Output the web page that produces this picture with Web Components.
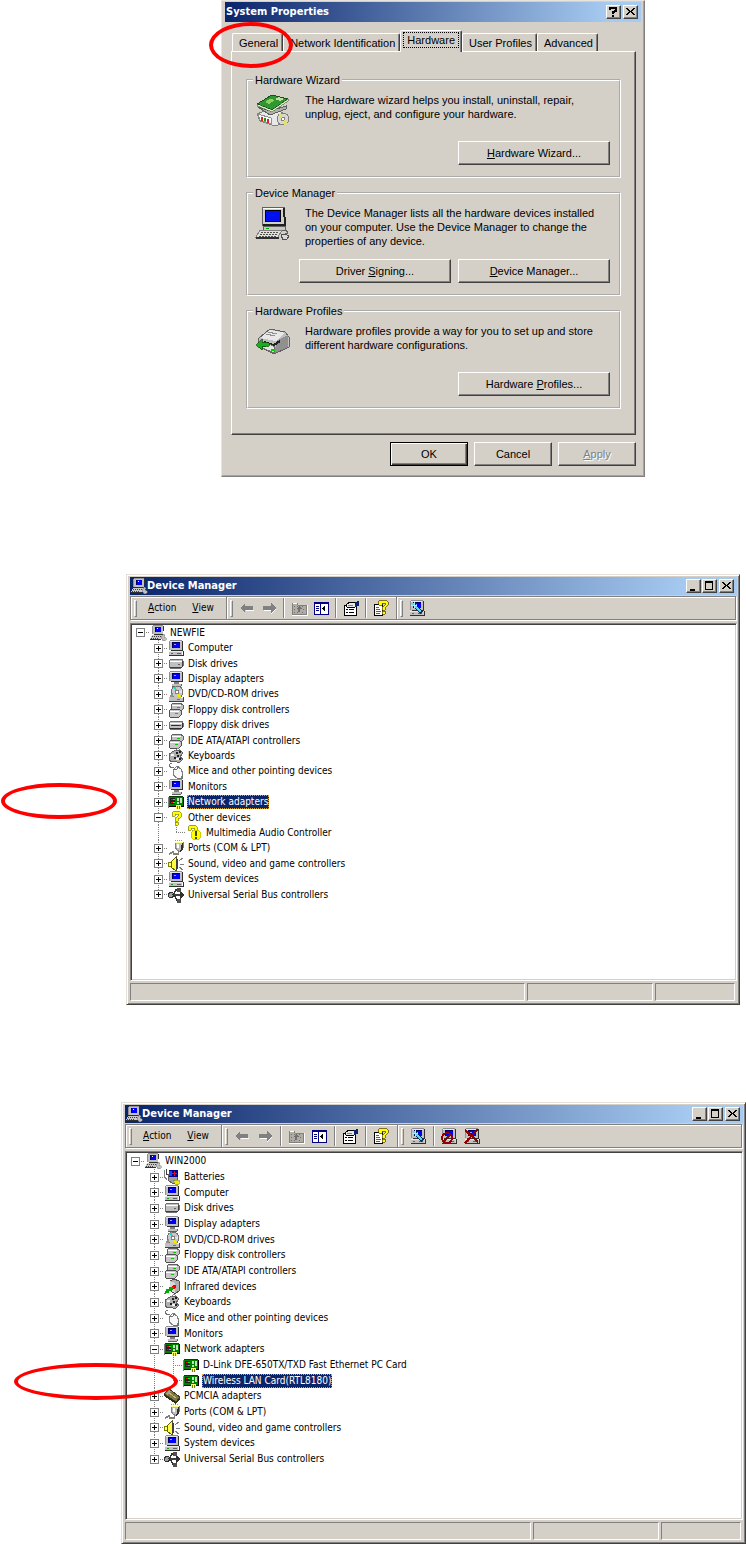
<!DOCTYPE html>
<html lang="en">

<head>
    <title>System Properties</title>
    <meta charset="utf-8">
    <meta name="viewport" content="width=device-width, initial-scale=1" />

    <style>
        :root {
            --face: #d4d0c8;
            --shadow: #808080;
            --dark: #404040;
            --navy: #0a246a;
            --sky: #a6caf0;
            --ui: "DejaVu Sans Condensed", "DejaVu Sans", sans-serif;
            --dialog: "Liberation Sans", sans-serif;
        }

        body {
            margin: 0;
            background: #fff;
            color: #000;
            font: 10px/14px var(--ui);
        }

        section {
            position: relative;
        }

        .props {
            padding: 0 101px 97px 221px;
        }

        .first {
            padding: 0 6px 97px 126px;
        }

        .second {
            padding: 0 0 0 121px;
            --tool: 23px;
        }

        mark-ring {
            position: absolute;
        }

        .props mark-ring {
            left: 209px;
            top: 22px;
            width: 84px;
            height: 46px;
        }

        .first mark-ring {
            left: 1px;
            top: 209px;
            width: 116px;
            height: 36px;
        }

        .second mark-ring {
            left: 14px;
            top: 261px;
            width: 164px;
            height: 37px;
        }
    </style>

    <template id="mark-ring">
        <style>
            :host {
                box-sizing: border-box;
                border: 4px solid #f00;
                border-radius: 50%;
                pointer-events: none;
            }
        </style>
    </template>

    <template id="title-bar">
        <style>
            :host {
                display: flex;
                align-items: center;
                height: 18px;
                padding: 0 3px 0 1px;
                background: linear-gradient(90deg, var(--navy), var(--sky) 92%);
                color: #fff;
            }

            h1 {
                flex: 1;
                margin: 0;
                font: bold 11px/14px var(--ui);
            }

            ::slotted(cap-button) {
                margin-left: 1px;
            }

            ::slotted(cap-button:last-child) {
                margin-left: 2px;
            }
        </style>
        <slot name="icon"></slot>
        <h1><slot></slot></h1>
        <slot name="buttons"></slot>
    </template>

    <template id="cap-button">
        <style>
            :host {
                display: block;
            }

            button {
                display: block;
                box-sizing: border-box;
                width: 15px;
                height: 14px;
                padding: 0;
                border: 1px solid;
                border-color: #fff var(--dark) var(--dark) #fff;
                background: var(--face);
                box-shadow: inset -1px -1px var(--shadow);
            }

            svg {
                display: block;
                width: 13px;
                height: 12px;
            }
        </style>
        <button type="button"></button>
    </template>

    <template id="push-button">
        <style>
            :host {
                display: block;
                width: 152px;
            }

            :host([small]) {
                width: 78px;
            }

            button {
                display: block;
                box-sizing: border-box;
                width: 100%;
                height: 24px;
                padding: 0;
                border: 1px solid;
                border-color: #fff var(--dark) var(--dark) #fff;
                background: var(--face);
                box-shadow: inset -1px -1px var(--shadow);
                color: #000;
                font: 11px/14px var(--dialog);
            }

            :host([default]) button {
                border-color: #000;
                box-shadow: inset 1px 1px #fff, inset -1px -1px var(--dark), inset -2px -2px var(--shadow);
            }

            button:disabled {
                color: var(--shadow);
                text-shadow: 1px 1px #fff;
            }
        </style>
        <button type="button"><slot></slot></button>
    </template>

    <template id="tab-button">
        <style>
            :host {
                display: block;
            }

            button {
                display: block;
                height: 18px;
                padding: 0 4px 0 6px;
                border: 1px solid;
                border-color: #fff var(--dark) transparent #fff;
                border-bottom: 0;
                border-radius: 2px 2px 0 0;
                background: var(--face);
                box-shadow: inset -1px 0 var(--shadow);
                color: #000;
                font: 11px/14px var(--dialog);
            }

            :host([selected]) button {
                height: 22px;
                margin-bottom: -1px;
                padding: 0 3px 3px 3px;
            }

            :host([selected]) slot {
                display: block;
                padding: 0 3px;
                outline: 1px dotted #000;
            }
        </style>
        <button type="button" role="tab"><slot></slot></button>
    </template>

    <template id="group-box">
        <style>
            :host {
                display: block;
                --body: 89px;
            }

            :host([tall]) {
                --body: 94px;
            }

            fieldset {
                margin: 0;
                padding: 0;
                border: 2px groove #fff;
            }

            legend {
                margin-left: 5px;
                padding: 0 2px;
            }

            .body {
                display: flex;
                flex-direction: column;
                justify-content: space-between;
                box-sizing: border-box;
                min-height: var(--body);
                padding: 6px 9px 11px 8px;
            }

            .text {
                display: flex;
                gap: 15px;
            }

            p {
                flex: 1;
                margin: 0;
            }

            .actions {
                display: flex;
                justify-content: flex-end;
                gap: 7px;
            }
        </style>
        <fieldset>
            <legend></legend>
            <div class="body">
                <div class="text">
                    <slot name="icon"></slot>
                    <p><slot></slot></p>
                </div>
                <div class="actions"><slot name="actions"></slot></div>
            </div>
        </fieldset>
    </template>

    <template id="property-dialog">
        <style>
            :host {
                display: block;
                padding: 1px 3px 10px;
                border: 1px solid;
                border-color: #e8e4dc var(--shadow) var(--shadow) #e8e4dc;
                background: var(--face);
                box-shadow: inset -1px -1px #a8a49c;
                font: 11px/14px var(--dialog);
            }

            .tabs {
                display: flex;
                align-items: flex-end;
                margin: 8px 6px 0 7px;
                height: 21px;
            }

            .page {
                display: flex;
                flex-direction: column;
                gap: 8px;
                margin: 0 5px 0 6px;
                padding: 21px 14px 25px;
                border: 1px solid;
                border-color: #fff var(--dark) var(--dark) #fff;
                box-shadow: inset -1px -1px var(--shadow);
            }

            .buttons {
                display: flex;
                justify-content: flex-end;
                gap: 6px;
                margin: 7px 5px 0;
            }
        </style>
        <slot name="title"></slot>
        <div class="tabs" role="tablist"><slot name="tabs"></slot></div>
        <div class="page"><slot></slot></div>
        <div class="buttons"><slot name="buttons"></slot></div>
    </template>

    <template id="tool-button">
        <style>
            :host {
                display: block;
            }

            button {
                display: flex;
                align-items: center;
                justify-content: center;
                min-width: var(--tool, 22px);
                height: 20px;
                padding: 0;
                border: 0;
                background: none;
                color: #000;
                font: inherit;
            }

            :host([menu]) button {
                padding: 0 8px;
            }
        </style>
        <button type="button"><slot></slot></button>
    </template>

    <template id="tool-band">
        <style>
            :host {
                display: flex;
                align-items: center;
                padding: 0 4px 0 3px;
                border-right: 1px solid var(--shadow);
                box-shadow: 1px 0 #fff;
            }

            :host(:last-of-type) {
                border: 0;
                box-shadow: none;
            }

            .grip {
                box-sizing: border-box;
                width: 3px;
                height: 17px;
                margin-right: 3px;
                border: 1px solid;
                border-color: #fff var(--shadow) var(--shadow) #fff;
            }

            ::slotted(hr) {
                width: 1px;
                height: 20px;
                margin: 0 3px;
                border: solid;
                border-width: 0 1px 0 0;
                border-color: #fff;
                background: var(--shadow);
            }
        </style>
        <div class="grip"></div>
        <slot></slot>
    </template>

    <template id="tree-item">
        <style>
            :host {
                display: flex;
                align-items: center;
                height: 15px;
            }

            .cell {
                flex: none;
                align-self: stretch;
                display: flex;
                align-items: center;
                width: 14px;
                --v: repeating-linear-gradient(#808080 0 1px, transparent 1px 2px) 4px 0 / 1px 100% no-repeat;
                --half: repeating-linear-gradient(#808080 0 1px, transparent 1px 2px) 4px 0 / 1px 50% no-repeat;
                --h: repeating-linear-gradient(90deg, #808080 0 1px, transparent 1px 2px) 4px 50% / 10px 1px no-repeat;
            }

            .cell.indent {
                width: var(--indent);
            }

            .cell.line {
                background: var(--v);
            }

            .cell.node {
                background: var(--v), var(--h);
            }

            .cell.root {
                background: var(--h);
            }

            .cell.end {
                background: var(--half), var(--h);
            }

            button {
                display: block;
                width: 9px;
                height: 9px;
                padding: 0;
                border: 1px solid var(--shadow);
                background: #fff;
            }

            button svg {
                display: block;
                width: 7px;
                height: 7px;
            }

            .label {
                margin-left: 3px;
                padding: 0 1px;
                white-space: nowrap;
            }

            :host([selected]) .label {
                background: var(--navy);
                color: #fff;
                outline: 1px dotted #e0a030;
                outline-offset: -1px;
            }
        </style>
        <span class="label"><slot></slot></span>
    </template>

    <template id="tree-view">
        <style>
            :host {
                display: block;
                box-sizing: border-box;
                min-height: 358px;
                padding: 1px 4px 0 5px;
                border: 1px solid;
                border-color: var(--shadow) #fff #fff var(--shadow);
                background: #fff;
                box-shadow: inset 1px 1px var(--dark), inset -1px -1px var(--face);
                --indent: 18px;
            }

            ::slotted(tree-item:nth-child(5n + 2)),
            ::slotted(tree-item:nth-child(5n + 5)) {
                height: 16px;
            }

            :host([roomy]) {
                min-height: 369px;
                --indent: 19px;
            }

            :host([roomy]) ::slotted(tree-item) {
                height: 16px;
            }

            :host([roomy]) ::slotted(tree-item:nth-child(3n)) {
                height: 15px;
            }
        </style>
        <slot></slot>
    </template>

    <template id="console-window">
        <style>
            :host {
                display: block;
                padding: 2px 2px 2px 3px;
                border: 1px solid;
                border-color: #e4e0d8 var(--dark) var(--dark) #e4e0d8;
                background: var(--face);
                box-shadow: inset 1px 1px #fff, inset -1px -1px var(--shadow);
            }

            .tools {
                display: flex;
                height: 22px;
                margin: 1px 1px 3px 0;
                border: 1px solid var(--shadow);
                box-shadow: inset 1px 1px #fff, 1px 1px #fff;
            }

            .status {
                display: flex;
                gap: 2px;
                margin: 2px 2px 1px 0;
            }

            .status div {
                box-sizing: border-box;
                width: 80px;
                height: 18px;
                border: 1px solid;
                border-color: var(--shadow) #fff #fff var(--shadow);
            }

            .status div:nth-child(1) {
                flex: 1;
            }

            .status div:nth-child(2) {
                width: 126px;
            }
        </style>
        <slot name="title"></slot>
        <div class="tools" role="toolbar"><slot name="tools"></slot></div>
        <slot></slot>
        <div class="status">
            <div></div>
            <div></div>
            <div></div>
        </div>
    </template>

    <template id="win-icon">
        <style>
            :host {
                display: block;
                flex: none;
                width: 16px;
                height: 16px;
            }

            :host([large]) {
                width: 34px;
                height: 34px;
            }

            svg {
                display: block;
                width: 100%;
                height: 100%;
                overflow: visible;
            }
        </style>
    </template>

    <script>
        // shared pieces, 16 x 16 grid
        const monitor = `
            <path d="M2 1h12v9H2z" fill="#c0c0c0"/><path d="M1 1h1v9H1zM2 0h12v1H2z" fill="#909090"/><path d="M2 1h11v1H2z" fill="#e8e8e8"/>
            <path d="M4 2h8v6H4z" fill="#000060"/><path d="M5 3h7v5H5z" fill="#0000ff"/><path d="M6 4h2v1H6z" fill="#a0a0ff"/>
            <path d="M14 1h1v10H3v-1h11z" fill="#303030"/>`;
        const desktop = monitor + `
            <path d="M1 12h13v3H1z" fill="#c0c0c0"/><path d="M1 11h14v1H1z" fill="#e8e8e8"/>
            <path d="M1 15h14v-4h1v5H1z" fill="#303030"/><path d="M3 13h2v1H3z" fill="#0a0"/><path d="M9 13h4v1H9z" fill="#606060"/>`;
        const screen = monitor + `
            <path d="M6 11h5v2H6z" fill="#808080"/><path d="M4 13h9v2H4z" fill="#c0c0c0"/><path d="M4 15h9v1H4zM13 13h1v2h-1z" fill="#606060"/>`;
        const workstation = `
            <path d="M3 1h10v8H3z" fill="#c0c0c0"/><path d="M3 0h10v1H3zM2 1h1v8H2z" fill="#909090"/><path d="M5 2h6v5H5z" fill="#000060"/>
            <path d="M6 2h5v5H6z" fill="#0000ff"/><path d="M7 3h1v1H7z" fill="#fff"/><path d="M13 1h1v8H4v1h10z" fill="#303030"/>
            <path d="M2 10h12l-2 4H0z" fill="#c8c8c8"/><path d="M2 11h1v1H2zm2 0h1v1H4zm2 0h1v1H6zm2 0h1v1H8zm2 0h1v1h-1zM1 13h1v1H1zm2 0h1v1H3zm2 0h1v1H5zm2 0h1v1H7z" fill="#404040"/>
            <path d="M0 14h11v1H0z" fill="#303030"/><path d="M11 12l2-3 2 1-1 2 2 1v2l-3 1-1-2z" fill="#c0c0c0" stroke="#707070" stroke-width=".5"/>`;
        const controller = `
            <path d="M3 3l2-2h7l3 2v4l-2 2H3z" fill="#c0c0c0" stroke="#606060" stroke-width="1"/><path d="M4 3h9v1H4z" fill="#fff"/><path d="M9 5h3v1H9z" fill="#0c0"/>
            <path d="M1 9l2-2h8l2 2v4l-2 2H2l-1-2z" fill="#c8c8c8" stroke="#505050" stroke-width="1"/><path d="M2 9h9v1H2z" fill="#fff"/><path d="M7 11h3v1H7z" fill="#0c0"/>`;
        const question = `
            <path d="M4 6V3l2-2h5l2 2v4l-3 2v2H7V8l3-2V4H7v2z" fill="#ff0" stroke="#808000" stroke-width=".7"/>
            <path d="M7 12h3v3H7z" fill="#ff0" stroke="#808000" stroke-width=".7"/>`;
        const card = `
            <path d="M0 3h1v11H0z" fill="#808080"/><path d="M1 3h14v9H1z" fill="#008000"/><path d="M1 2h14v1H1z" fill="#004000"/>
            <path d="M2 4h5v6H2z" fill="#202020"/><path d="M3 5h2v1H3zm0 3h2v1H3z" fill="#f00"/><path d="M5 5h2v1H5zm0 3h2v1H5z" fill="#0f0"/>
            <path d="M9 4h2v3H9zm3 0h2v5h-2zM9 8h2v2H9z" fill="#c0e0c0"/><path d="M15 3h1v10h-4v-1h3zM1 12h7v1H1z" fill="#000"/><path d="M8 11h5v4H8z" fill="#ffff60"/><path d="M9 12h1v3H9zm2 0h1v3h-1z" fill="#808000"/>`;
        const wand = `<path d="M4 4l9 9" stroke="#003050" stroke-width="3"/><path d="M4 4l8 8" stroke="#60d0ff" stroke-width="2"/><path d="M5 2v6M2 5h6" stroke="#a0f0ff"/>`;

        const icons = {
            desktop,
            screen,
            workstation,
            controller,
            question,
            card,
            drive: `<path d="M1 5l2-2h11l1 2v5l-2 2H2l-1-1z" fill="#c0c0c0" stroke="#707070"/><path d="M2 5h12v1H2z" fill="#fff"/><path d="M14 5h1v6h-1zM2 11h12v1H2z" fill="#404040"/><path d="M10 8h2v1h-2z" fill="#606060"/>`,
            floppy: `<path d="M1 6l2-2h11l1 2v4l-2 2H2l-1-1z" fill="#c0c0c0" stroke="#707070"/><path d="M2 6h12v1H2z" fill="#fff"/><path d="M3 8h8v1H3zM14 6h1v5h-1zM2 11h12v1H2z" fill="#303030"/><path d="M11 8h2v1h-2z" fill="#e00"/>`,
            disc: `<circle cx="9" cy="6" r="6" fill="#c8c8c8" stroke="#707070"/><path d="M9 6L5 1l3-1z" fill="#0dd"/><path d="M9 6l4 5-3 1z" fill="#ee0"/><path d="M9 6l5-2v3z" fill="#e8e8e8"/><circle cx="9" cy="6" r="2" fill="#fff" stroke="#808080"/>
                <path d="M1 11h9l5 1v3H1z" fill="#c0c0c0"/><path d="M1 15h14v1H1zM15 11h1v5h-1z" fill="#404040"/><path d="M2 9l3-3v5H2z" fill="#909090"/><path d="M9 13h3v1H9z" fill="#0b0"/>`,
            keyboard: `<path d="M1 6l5-3 6-1 3 3-3 4 3 2-4 4-4-2-3 1-3-2z" fill="#b0b0b0" stroke="#606060"/><path d="M8 4h2v2H8zm3-1h2v2h-2zM9 7h2v2H9zm2 3h2v2h-2zM6 9h2v2H6z" fill="#202020"/><path d="M3 6h3v2H3zm5 4h3v2H8z" fill="#f4f4f4"/><path d="M7 3l3-3 2 2" fill="none" stroke="#808080"/>`,
            mouse: `<path d="M5 7l4-4 4 3 2 5-2 4H9l-4-3z" fill="#f8f8f8" stroke="#808080"/><path d="M5 7l4-1 2-3M9 15h5v-4" fill="none" stroke="#707070"/><path d="M6 5C1 5 0 1 4 0" fill="none" stroke="#707070"/>`,
            warn: `<path d="M2 5V2l2-2h5l2 2v4L9 7v5H6V6l2-1V3H5v2z" fill="#ff0" stroke="#808000" stroke-width=".7"/><circle cx="10" cy="10" r="5" fill="#ff0" stroke="#d0d000"/><path d="M9 6h2v5H9zM9 12h2v2H9z" fill="#404000"/>`,
            port: `<path d="M7 2h8v6l-3 4-3-2-2-3z" fill="#c0c0c0" stroke="#808080"/><path d="M7 0h1v1H7zm2 0h1v1H9zm2 0h1v1h-1zm2 0h1v1h-1z" fill="#aa0"/><path d="M7 2h8v1H7z" fill="#ff8"/><path d="M9 4h2v4H9z" fill="#fff"/><path d="M11 11l-1 3H6l-1-2-4 2" fill="none" stroke="#808080" stroke-width="1.5"/><path d="M14 3h1v6l-3 3z" fill="#303030"/>`,
            sound: `<path d="M0 6h3v5H0z" fill="#808000"/><path d="M3 6l5-5v14l-5-4z" fill="#ffff40" stroke="#606000"/><path d="M1 7h2v3H1z" fill="#ff8"/><path d="M8 1l2 3v8l-2 3z" fill="#404040"/><path d="M11 5l4-3M12 8h4M11 11l4 3" stroke="#808080"/>`,
            usb: `<path d="M1 8h13" stroke="#404040" stroke-width="2"/><path d="M12 4l4 4-4 4z" fill="#303030"/><circle cx="3" cy="8" r="2.5" fill="#a0a0a0" stroke="#303030"/><path d="M5 8l3-5h3M6 8l3 5h2" fill="none" stroke="#303030" stroke-width="1.5"/><path d="M9 1h4v4H9zM9 12h4v4H9z" fill="#505050"/>`,
            battery: `<path d="M0 1v6l3 4" fill="none" stroke="#808080"/><path d="M2 0v5h3" fill="none" stroke="#404040"/><path d="M4 5h9v8l-4 2-5-4z" fill="#a0a0a0" stroke="#606060"/><path d="M5 1h9v7H5z" fill="#000090"/><path d="M5 2h3v5H5z" fill="#2040ff"/><path d="M10 2h1v5h-1zM8 4h5v1H8z" fill="#f00"/><path d="M9 12l3-1 4 1-1 3-3 1z" fill="#ee0" stroke="#707000" stroke-width=".5"/>`,
            infrared: `<path d="M6 2l4-2 5 2v10l-4 3-5-4z" fill="#b0b0b0" stroke="#505050"/><path d="M6 2l5 2v10l-5-3z" fill="#d8d8d8"/><circle cx="10" cy="8" r="2" fill="#e00"/><path d="M1 15l2-4 1 2 2-4 1 2 2-3" fill="none" stroke="#0a0" stroke-width="2"/>`,
            pcmcia: `<path d="M0 6l5-5 11 8-4 5z" fill="#807840" stroke="#404020"/><path d="M4 4l8 6" stroke="#c0b880"/><path d="M0 6v2l12 8 4-5V9l-4 5z" fill="#303018"/><path d="M5 2l2 1-3 4-2-1z" fill="#a0a0a0"/>`,
            back: `<path d="M1 8l5-5v3h8v4H6v3z" fill="#808080"/><path d="M7 10h8v1H7z" fill="#fff"/>`,
            forward: `<path d="M15 8l-5-5v3H2v4h8v3z" fill="#808080"/><path d="M3 10h7v1H3zM10 13l5-5v1l-5 5z" fill="#fff"/>`,
            folder: `<path d="M1 3h5l1 2h8v9H1z" fill="#b0aca4" stroke="#808080"/><path d="M2 3h4M1 15h15V5" fill="none" stroke="#fff"/><path d="M3 6h1M6 6h1M11 6h1M3 9h1M12 9h1M3 12h1M6 12h1M11 12h1" stroke="#707070"/><path d="M8 6l3 3H9v3H7V9H5z" fill="#707070"/>`,
            pane: `<path d="M1 2h14v12H1z" fill="#fff" stroke="#000080" stroke-width="1"/><path d="M1 2h14v2H1zM7 3h1v11H7z" fill="#000080"/><path d="M3 6h3M3 8h3M3 10h3" stroke="#000080"/><path d="M12 5v7L9 8.5z" fill="#000"/>`,
            props: `<path d="M1 5h12v10H1z" fill="#fff" stroke="#000"/><path d="M3 9h2M3 12h2M6 9h5M6 12h5" stroke="#000"/><path d="M3 5l4-3 5 1v4l-5 1-3-1z" fill="#e8e8e8" stroke="#000"/><path d="M5 5h5" stroke="#808080"/><path d="M12 2l4-1v5l-4 1z" fill="#0a246a"/>`,
            help: `<path d="M1 4h8v11H1z" fill="#fff" stroke="#000"/><path d="M3 7h3M3 9h4M3 11h5M3 13h4" stroke="#606060"/><path d="M5 4l1-3 3-1h3l3 2v3l-3 3v2H9V7l3-2V3H9v2H6z" fill="#ff0" stroke="#504000" stroke-width=".7"/><path d="M9 11h3v3H9z" fill="#ff0" stroke="#504000" stroke-width=".7"/>`,
            scan: desktop + wand,
            disable: desktop + `<circle cx="6" cy="10" r="5" fill="none" stroke="#900000" stroke-width="2"/><path d="M3 13l7-7" stroke="#900000" stroke-width="2"/>`,
            uninstall: desktop + `<path d="M1 2l13 12M14 1L1 15" stroke="#900000" stroke-width="2"/>`,
            wizard: `<path d="M1 21l3 7 15 5 12-4-2-8-13-6z" fill="#e8e8e8" stroke="#808080"/><circle cx="27" cy="26" r="6" fill="#d8d8d0" stroke="#808080"/><path d="M27 26l-5-4 3-2zM27 26l5 5-4 1z" fill="#e8e060"/><circle cx="27" cy="26" r="1.5" fill="#fff" stroke="#808080"/>
                <path d="M2 21l13 4v6l-11-4z" fill="#f8f8f8" stroke="#909090"/><path d="M6 24v4M12 26v4" stroke="#e02020" stroke-width="2"/><path d="M9 25v3" stroke="#209020" stroke-width="2"/>
                <path d="M2 14l12 8 16-6v-3L14 18z" fill="#b0b0a8" stroke="#606060"/><path d="M1 11l15-9 16 4-16 11z" fill="#309830" stroke="#185018"/><path d="M1 11v2l15 6 16-11V6L16 17z" fill="#e8e8d0" stroke="#185018" stroke-width=".5"/><path d="M9 9l5-3 5 1-6 4z" fill="#90d060"/><path d="M19 6l4-2 5 2-4 2z" fill="#c0e0a0"/>`,
            computer: `<path d="M6 1h22v18H6z" fill="#d0d0c8" stroke="#606060"/><path d="M7 2h20" stroke="#fff"/><path d="M9 4h16v12H9z" fill="#000"/><path d="M10 5h14v10H10z" fill="#0010f0"/><path d="M28 2l1 17H7" fill="none" stroke="#202020" stroke-width="2"/>
                <path d="M7 20h22v4H7z" fill="#c8c8c0" stroke="#606060"/><path d="M10 22h3" stroke="#0a0"/><path d="M4 24h22l-4 7H0z" fill="#e0e0d8" stroke="#808080"/><path d="M5 26h18M4 28h18M3 30h17" stroke="#505050" stroke-dasharray="2 1"/><path d="M0 32h23" stroke="#303030" stroke-width="2"/><path d="M28 25c5-1 4 3 1 3-4 0-3 4 0 4" fill="none" stroke="#606060"/><path d="M25 29l4-1 4 2-2 3-4 1z" fill="#d8d8d8" stroke="#505050"/>`,
            profiles: `<path d="M3 14L14 5l15 3 4 5v10L18 30 2 22z" fill="#c0c0c0" stroke="#606060"/><path d="M4 14L14 6l15 3-9 8z" fill="#e8e8e8"/><path d="M10 10l9 2M12 8l9 2" stroke="#909090"/><path d="M20 17l12-6v12l-13 6z" fill="#909090"/><path d="M8 18l10 3 6-4" fill="none" stroke="#202020" stroke-width="2"/><path d="M2 22l7-4 10 5-1 6z" fill="#e0e8e0" stroke="#707070"/><path d="M0 21l6-6v3l7 1v3l-7 1v3z" fill="#18b018" stroke="#084008" stroke-width=".7"/><path d="M15 26h4" stroke="#0c0" stroke-width="2"/>`
        };

        const svg = (size, body) =>
            `<svg viewBox="${size}" shape-rendering="crispEdges" fill="none" aria-hidden="true">${body}</svg>`;

        const glyphs = {
            Minimize: `<path d="M3 9h5v2H3z" fill="#000"/>`,
            Maximize: `<path d="M2 1h8v9H2zM3 3v6h6V3z" fill="#000" fill-rule="evenodd"/>`,
            Close: `<path d="M2 2h2v1h1v1h1v1h1V4h1V3h1V2h2v1h-1v1H9v1H8v1h1v1h1v1h1v1H9V8H8V7H7V6H6v1H5v1H4v1H2V8h1V7h1V6h1V5H4V4H3V3H2z" fill="#000"/>`,
            Help: `<path d="M3 4V2h6v3L6 6v2M6 9v2" stroke="#000" stroke-width="2"/>`
        };

        // what each element does once its template is in place
        const setup = {
            "win-icon"(host, root) {
                const large = host.hasAttribute("large");
                root.append(fragment(svg(large ? "0 0 34 34" : "0 0 16 16", icons[host.getAttribute("name")])));
            },
            "cap-button"(host, root) {
                const button = root.querySelector("button");
                const name = host.getAttribute("name");
                button.setAttribute("aria-label", name);
                button.append(fragment(svg("0 0 13 12", glyphs[name])));
            },
            "push-button"(host, root) {
                root.querySelector("button").disabled = host.hasAttribute("disabled");
            },
            "tool-button"(host, root) {
                if (host.title) root.querySelector("button").setAttribute("aria-label", host.title);
            },
            "tab-button"(host, root) {
                root.querySelector("button").setAttribute("aria-selected", host.hasAttribute("selected"));
            },
            "group-box"(host, root) {
                root.querySelector("legend").textContent = host.getAttribute("label");
            },
            "tree-view"(host) {
                host.setAttribute("role", "tree");
            },
            "tree-item"(host, root) {
                const level = Number(host.getAttribute("level") ?? 1);
                const state = host.getAttribute("state");
                const last = host.hasAttribute("last");
                let cells = "";
                for (let i = 0; i < level; i++) {
                    cells += `<span class="cell indent ${i ? "line" : ""}"></span>`;
                }
                const kind = level === 0 ? "root" : last ? "end" : "node";
                const sign = state === "open" ? "M1 3h5v1H1z" : "M1 3h5v1H1zM3 1h1v5H3z";
                const box = state === "leaf" ? "" :
                    `<button type="button" aria-label="${state === "open" ? "Collapse" : "Expand"}">${svg("0 0 7 7", `<path d="${sign}" fill="#000"/>`)}</button>`;
                cells += `<span class="cell ${kind}">${box}</span>`;
                cells += `<win-icon name="${host.getAttribute("icon")}"></win-icon>`;
                root.insertBefore(fragment(cells), root.querySelector(".label"));
                host.setAttribute("role", "treeitem");
            }
        };

        function fragment(html) {
            const template = document.createElement("template");
            template.innerHTML = html;
            return template.content;
        }

        document
            .querySelectorAll("template")
            .forEach(element => {

                customElements.define(element.id, class extends HTMLElement {

                    constructor() {
                        super()
                            .attachShadow({ mode: "open" })
                            .appendChild(element.content.cloneNode(true));
                    }

                    connectedCallback() {
                        if (this.ready) return;
                        this.ready = true;
                        setup[element.id]?.(this, this.shadowRoot);
                    }
                })
            })
    </script>
</head>

<body>
    <main>
        <section class="props">
            <property-dialog>
                <title-bar slot="title" style="height: 20px">System Properties
                    <cap-button slot="buttons" name="Help"></cap-button>
                    <cap-button slot="buttons" name="Close"></cap-button>
                </title-bar>
                <tab-button slot="tabs">General</tab-button>
                <tab-button slot="tabs">Network Identification</tab-button>
                <tab-button slot="tabs" selected>Hardware</tab-button>
                <tab-button slot="tabs">User Profiles</tab-button>
                <tab-button slot="tabs">Advanced</tab-button>

                <group-box label="Hardware Wizard">
                    <win-icon slot="icon" large name="wizard"></win-icon>
                    The Hardware wizard helps you install, uninstall, repair,<br>unplug, eject, and configure your hardware.
                    <push-button slot="actions"><u>H</u>ardware Wizard...</push-button>
                </group-box>
                <group-box label="Device Manager" tall>
                    <win-icon slot="icon" large name="computer"></win-icon>
                    The Device Manager lists all the hardware devices installed<br>on your computer. Use the Device Manager to change the<br>properties of any device.
                    <push-button slot="actions">Driver <u>S</u>igning...</push-button>
                    <push-button slot="actions"><u>D</u>evice Manager...</push-button>
                </group-box>
                <group-box label="Hardware Profiles">
                    <win-icon slot="icon" large name="profiles"></win-icon>
                    Hardware profiles provide a way for you to set up and store<br>different hardware configurations.
                    <push-button slot="actions">Hardware <u>P</u>rofiles...</push-button>
                </group-box>

                <push-button slot="buttons" small default>OK</push-button>
                <push-button slot="buttons" small>Cancel</push-button>
                <push-button slot="buttons" small disabled><u>A</u>pply</push-button>
            </property-dialog>
            <mark-ring></mark-ring>
        </section>

        <section class="first">
            <console-window>
                <title-bar slot="title">
                    <win-icon slot="icon" name="workstation"></win-icon>
                    Device Manager
                    <cap-button slot="buttons" name="Minimize"></cap-button>
                    <cap-button slot="buttons" name="Maximize"></cap-button>
                    <cap-button slot="buttons" name="Close"></cap-button>
                </title-bar>
                <tool-band slot="tools">
                    <tool-button menu><u>A</u>ction</tool-button>
                    <tool-button menu><u>V</u>iew</tool-button>
                </tool-band>
                <tool-band slot="tools">
                    <tool-button title="Back"><win-icon name="back"></win-icon></tool-button>
                    <tool-button title="Forward"><win-icon name="forward"></win-icon></tool-button>
                    <hr>
                    <tool-button title="Up one level"><win-icon name="folder"></win-icon></tool-button>
                    <tool-button title="Show/Hide Console Tree"><win-icon name="pane"></win-icon></tool-button>
                    <hr>
                    <tool-button title="Properties"><win-icon name="props"></win-icon></tool-button>
                    <hr>
                    <tool-button title="Help"><win-icon name="help"></win-icon></tool-button>
                </tool-band>
                <tool-band slot="tools">
                    <tool-button title="Scan for hardware changes"><win-icon name="scan"></win-icon></tool-button>
                </tool-band>

                <tree-view>
                    <tree-item level="0" state="open" icon="workstation">NEWFIE</tree-item>
                    <tree-item icon="desktop">Computer</tree-item>
                    <tree-item icon="drive">Disk drives</tree-item>
                    <tree-item icon="screen">Display adapters</tree-item>
                    <tree-item icon="disc">DVD/CD-ROM drives</tree-item>
                    <tree-item icon="controller">Floppy disk controllers</tree-item>
                    <tree-item icon="floppy">Floppy disk drives</tree-item>
                    <tree-item icon="controller">IDE ATA/ATAPI controllers</tree-item>
                    <tree-item icon="keyboard">Keyboards</tree-item>
                    <tree-item icon="mouse">Mice and other pointing devices</tree-item>
                    <tree-item icon="screen">Monitors</tree-item>
                    <tree-item icon="card" selected>Network adapters</tree-item>
                    <tree-item icon="question" state="open">Other devices</tree-item>
                    <tree-item icon="warn" level="2" state="leaf" last>Multimedia Audio Controller</tree-item>
                    <tree-item icon="port">Ports (COM &amp; LPT)</tree-item>
                    <tree-item icon="sound">Sound, video and game controllers</tree-item>
                    <tree-item icon="desktop">System devices</tree-item>
                    <tree-item icon="usb" last>Universal Serial Bus controllers</tree-item>
                </tree-view>
            </console-window>
            <mark-ring></mark-ring>
        </section>

        <section class="second">
            <console-window>
                <title-bar slot="title">
                    <win-icon slot="icon" name="workstation"></win-icon>
                    Device Manager
                    <cap-button slot="buttons" name="Minimize"></cap-button>
                    <cap-button slot="buttons" name="Maximize"></cap-button>
                    <cap-button slot="buttons" name="Close"></cap-button>
                </title-bar>
                <tool-band slot="tools">
                    <tool-button menu><u>A</u>ction</tool-button>
                    <tool-button menu><u>V</u>iew</tool-button>
                </tool-band>
                <tool-band slot="tools">
                    <tool-button title="Back"><win-icon name="back"></win-icon></tool-button>
                    <tool-button title="Forward"><win-icon name="forward"></win-icon></tool-button>
                    <hr>
                    <tool-button title="Up one level"><win-icon name="folder"></win-icon></tool-button>
                    <tool-button title="Show/Hide Console Tree"><win-icon name="pane"></win-icon></tool-button>
                    <hr>
                    <tool-button title="Properties"><win-icon name="props"></win-icon></tool-button>
                    <hr>
                    <tool-button title="Help"><win-icon name="help"></win-icon></tool-button>
                </tool-band>
                <tool-band slot="tools">
                    <tool-button title="Scan for hardware changes"><win-icon name="scan"></win-icon></tool-button>
                    <hr>
                    <tool-button title="Disable"><win-icon name="disable"></win-icon></tool-button>
                    <tool-button title="Uninstall"><win-icon name="uninstall"></win-icon></tool-button>
                </tool-band>

                <tree-view roomy>
                    <tree-item level="0" state="open" icon="workstation">WIN2000</tree-item>
                    <tree-item icon="battery">Batteries</tree-item>
                    <tree-item icon="desktop">Computer</tree-item>
                    <tree-item icon="drive">Disk drives</tree-item>
                    <tree-item icon="screen">Display adapters</tree-item>
                    <tree-item icon="disc">DVD/CD-ROM drives</tree-item>
                    <tree-item icon="controller">Floppy disk controllers</tree-item>
                    <tree-item icon="controller">IDE ATA/ATAPI controllers</tree-item>
                    <tree-item icon="infrared">Infrared devices</tree-item>
                    <tree-item icon="keyboard">Keyboards</tree-item>
                    <tree-item icon="mouse">Mice and other pointing devices</tree-item>
                    <tree-item icon="screen">Monitors</tree-item>
                    <tree-item icon="card" state="open">Network adapters</tree-item>
                    <tree-item icon="card" level="2" state="leaf">D-Link DFE-650TX/TXD Fast Ethernet PC Card</tree-item>
                    <tree-item icon="card" level="2" state="leaf" last selected>Wireless LAN Card(RTL8180)</tree-item>
                    <tree-item icon="pcmcia">PCMCIA adapters</tree-item>
                    <tree-item icon="port">Ports (COM &amp; LPT)</tree-item>
                    <tree-item icon="sound">Sound, video and game controllers</tree-item>
                    <tree-item icon="desktop">System devices</tree-item>
                    <tree-item icon="usb" last>Universal Serial Bus controllers</tree-item>
                </tree-view>
            </console-window>
            <mark-ring></mark-ring>
        </section>
    </main>
</body>

</html>
